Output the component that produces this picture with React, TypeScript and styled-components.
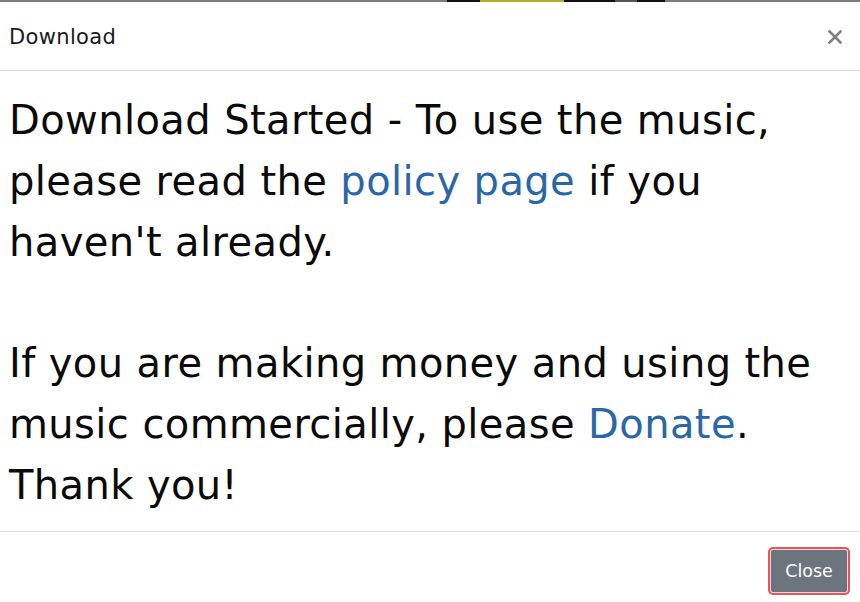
import React from "react";
import styled, { createGlobalStyle } from "styled-components";

const Global = createGlobalStyle`
  html, body { margin: 0; padding: 0; background: #fff; }
  body { font-family: "DejaVu Sans", Verdana, sans-serif; color: #111; }
  * { box-sizing: border-box; }
`;

const Page = styled.div`
  width: 860px;
  height: 602px;
  display: flex;
  flex-direction: column;
  overflow: hidden;
  background: #fff;
`;

const Backdrop = styled.div`
  height: 2px;
  flex: none;
  display: flex;
  background: #7d7d7d;
`;

const Seg = styled.div<{ $w: number; $c: string }>`
  width: ${(p) => p.$w}px;
  background: ${(p) => p.$c};
`;

const Header = styled.div`
  height: 69px;
  flex: none;
  display: flex;
  align-items: center;
  justify-content: space-between;
  padding: 2px 17px 0 9px;
  border-bottom: 1px solid #dcdcdc;
`;

const Title = styled.div`
  font-size: 21px;
  letter-spacing: 0.35px;
  color: #1a1a1a;
`;

const CloseX = styled.button`
  border: none;
  background: none;
  padding: 0;
  width: 16px;
  height: 16px;
  display: flex;
  align-items: center;
  justify-content: center;
  cursor: pointer;
`;

const Body = styled.div`
  flex: 1;
  padding: 19px 9px 0 9px;
  font-size: 40px;
  line-height: 60.8px;
  letter-spacing: 0.4px;
  color: #0a0a0a;
`;

const Link = styled.a`
  color: #2b67a6;
  text-decoration: none;
`;

const Footer = styled.div`
  height: 71px;
  flex: none;
  border-top: 1px solid #dcdcdc;
  display: flex;
  justify-content: flex-end;
  align-items: flex-start;
  padding: 18px 13px 0 0;
`;

const Button = styled.button`
  width: 76px;
  height: 42px;
  border: none;
  background: #6c757d;
  color: #fff;
  font-family: "DejaVu Sans", Verdana, sans-serif;
  font-size: 17.5px;
  border-radius: 2px;
  box-shadow: 0 0 0 1px #f3d6d8, 0 0 0 3px #e4555c;
  padding: 0;
`;

export default function App() {
  return (
    <Page>
      <Global />
      <Backdrop>
        <Seg $w={447} $c="#7d7d7d" />
        <Seg $w={33} $c="#111" />
        <Seg $w={84} $c="#b3ad2a" />
        <Seg $w={51} $c="#111" />
        <Seg $w={22} $c="#555" />
        <Seg $w={28} $c="#111" />
      </Backdrop>
      <Header>
        <Title>Download</Title>
        <CloseX aria-label="Close">
          <svg width="14" height="14" viewBox="0 0 14 14">
            <path d="M1.5 1.5 L12.5 12.5 M12.5 1.5 L1.5 12.5" stroke="#808080" strokeWidth="2.6" strokeLinecap="square" />
          </svg>
        </CloseX>
      </Header>
      <Body>
        Download Started - To use the music, please read the <Link href="#">policy page</Link> if you haven't already.
        <br />
        <br />
        If you are making money and using the music commercially, please <Link href="#">Donate</Link>. Thank you!
      </Body>
      <Footer>
        <Button>Close</Button>
      </Footer>
    </Page>
  );
}
